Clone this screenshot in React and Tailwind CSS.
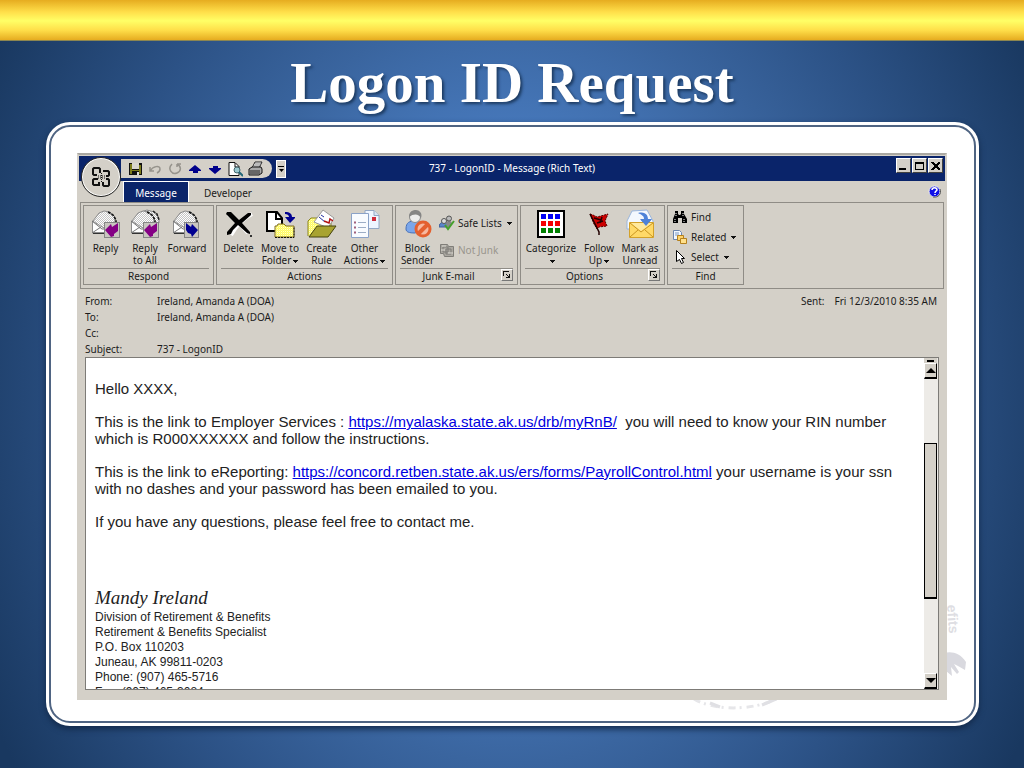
import React from 'react';

const Caret = () => (
  <svg width="5" height="3" viewBox="0 0 5 3" className="ml-0.5 inline-block align-middle" shapeRendering="crispEdges">
    <path d="M0 0h5v1H4v1H3v1H2V2H1V1H0z" fill="#111" />
  </svg>
);

const Icon = ({ size = 30, children, crisp }) => (
  <svg width={size} height={size} viewBox={`0 0 ${size} ${size}`} className="shrink-0" shapeRendering={crisp ? 'crispEdges' : 'auto'} aria-hidden="true">
    {children}
  </svg>
);

const Envelope = () => (
  <g>
    <path d="M2 12 8 4l5-2 6 1 5 5v7l-7 4H6z" fill="url(#dither)" stroke="#8b8b8b" />
    <path d="M17 3l5 3 3 5v4" fill="none" stroke="#111" strokeWidth="1.6" strokeDasharray="3 1" />
    <path d="M1.500 12v11.500h22V13l-9 7z" fill="#fff" stroke="#8b8b8b" />
    <path d="M1 12l10 8h4l9-7M1 24l9-6" fill="none" stroke="#777" />
    <path d="M2 24.500h12" stroke="#333" />
  </g>
);

const Dither = () => (
  <defs>
    <pattern id="dither" width="2" height="2" patternUnits="userSpaceOnUse">
      <rect width="2" height="2" fill="#fff" />
      <rect width="1" height="1" fill="#c4c4c4" />
      <rect x="1" y="1" width="1" height="1" fill="#c4c4c4" />
    </pattern>
    <pattern id="yellow" width="2" height="2" patternUnits="userSpaceOnUse">
      <rect width="2" height="2" fill="#ffff5a" />
      <rect width="1" height="1" fill="#fffbd0" />
      <rect x="1" y="1" width="1" height="1" fill="#fff68a" />
    </pattern>
  </defs>
);

const ReplyBadge = () => (
  <g>
    <rect x="13.500" y="13.500" width="15" height="15" fill="#c9c6c0" stroke="#858585" />
    <path d="M14 21l6-6 1 3 6-4v8l-4 3v2l-3 1z" fill="#850085" />
  </g>
);

const ReplyIcon = () => (
  <Icon>
    <Dither />
    <Envelope />
    <ReplyBadge />
  </Icon>
);

const ReplyAllIcon = () => (
  <Icon>
    <path d="M11 3l6-2 7 2 5 6v5l-3 2" fill="url(#dither)" stroke="#8b8b8b" />
    <path d="M23 2l4 3 2 6" fill="none" stroke="#222" strokeWidth="1.500" strokeDasharray="3 1" />
    <Envelope />
    <ReplyBadge />
  </Icon>
);

const ForwardIcon = () => (
  <Icon>
    <Envelope />
    <rect x="12.500" y="13.500" width="14" height="15" fill="#c9c6c0" stroke="#858585" />
    <path d="M14 14l5 4 1-3 6 6-6 7-1-3-3-1-2-3z" fill="#000090" />
  </Icon>
);

const DeleteIcon = () => (
  <Icon>
    <path d="M4 5c7 5 14 12 20 19M28 5C18 10 12 17 7 26" stroke="#fff" strokeWidth="4" fill="none" />
    <path d="M3 3h4l8 8 9-7h3v2l-9 8 8 9v2l-3-1-9-8-5 5-2 4-4 1v-3l8-9-7-7-2-2z" fill="#000" />
    <rect x="26" y="26" width="2" height="2" fill="#333" />
  </Icon>
);

const MoveIcon = () => (
  <Icon>
    <path d="M2 3h10l5 6v13H2z" fill="#fff" stroke="#000" strokeWidth="2" />
    <path d="M11 3v7h6" fill="none" stroke="#000" strokeWidth="2" />
    <path d="M10 17h2l1-2h6l2 2h8v11H10z" fill="url(#yellow)" stroke="#806d20" />
    <path d="M10 28.500h19V18" fill="none" stroke="#111" strokeDasharray="2 1" />
    <path d="M20 3c5 0 7 2 7 5h4l-6 6-5-6h4c0-2-2-3-4-3z" fill="#000090" />
  </Icon>
);

const CreateRuleIcon = () => (
  <Icon>
    <path d="M1 27V12l3-3h6l3 3h11v5" fill="url(#yellow)" stroke="#8a8420" />
    <path d="M7 13l9-12 11 8-6 10z" fill="#fff" stroke="#999" />
    <path d="M12 8l6 5M14 6l3 2" stroke="#2030a0" />
    <path d="M17 12l5 2 1-4 3 2" stroke="#b01010" strokeWidth="1.500" fill="none" />
    <path d="M2 28l8-11h19l-8 11z" fill="#a8a330" stroke="#45430c" />
  </Icon>
);

const OtherIcon = () => (
  <Icon>
    <path d="M15 1.500h9l5 5v13H15z" fill="#eef5ff" stroke="#93a7c4" />
    <path d="M24 1.500v5h5" fill="#d5e3f5" stroke="#93a7c4" />
    <rect x="22" y="8" width="4" height="4" fill="#cf2c3c" />
    <path d="M1.500 4.500h17v24h-17z" fill="#f8fbff" stroke="#8aa2c8" />
    <path d="M4 13.500h2M4 18.500h2M4 23.500h2" stroke="#a0607c" strokeWidth="2" />
    <path d="M8 13.500h8M8 18.500h8M8 23.500h8" stroke="#9cadc6" />
  </Icon>
);

const BlockIcon = () => (
  <Icon>
    <path d="M3 20c0-7 4-8 9-8s8 4 8 9l-8 3c-6 0-9-1-9-4z" fill="#7ba6ea" stroke="#4670b8" />
    <circle cx="12" cy="8" r="5.500" fill="#ececec" stroke="#8a8a8a" />
    <path d="M6 8c0-6 4-7 7-7s7 3 5 8c-2-4-7-5-12-1z" fill="#858585" />
    <circle cx="20" cy="20" r="7" fill="#f7b9a0" stroke="#e4602f" strokeWidth="3" />
    <path d="M15 25L25 15" stroke="#e4602f" strokeWidth="4" />
  </Icon>
);

const CategorizeIcon = () => (
  <Icon crisp>
    <rect x="1" y="1" width="28" height="28" fill="#000" />
    <rect x="3" y="3" width="24" height="24" fill="#fff" />
    {['#0000f5', '#f50000', '#008000'].map((fill, row) => [0, 1, 2].map(col => (
      <rect key={`${row}${col}`} x={5 + col * 7} y={5 + row * 7} width="5" height="5" fill={fill} />
    )))}
  </Icon>
);

const FlagIcon = () => (
  <Icon>
    <path d="M6 5l3 1 4 2 11-3-3 7 2 5-8 1-2 2-3-5z" fill="#cc0000" stroke="#5a0000" strokeDasharray="2 1" />
    <path d="M6 5l9 18v3M10 9l7 2M13 14l6-2M18 8l-2 6" stroke="#200" fill="none" strokeWidth="1.500" />
  </Icon>
);

const UnreadIcon = () => (
  <Icon>
    <path d="M2 12L7 2l15-1 6 11v8H2z" fill="#f4f8fd" stroke="#9bb6dc" />
    <path d="M13 4c8-2 10 3 10 6h4l-6 7-6-7h4c0-3-2-4-6-6z" fill="#4e82d8" />
    <path d="M4.500 13.500h24v15h-24z" fill="#ffd968" stroke="#d3a12a" />
    <path d="M6 14l10 8 11-8z" fill="#ffe99e" />
    <path d="M5 14l11 9 12-9M5 28l8-7M28 28l-8-7" fill="none" stroke="#c99522" />
    <path d="M16 11h10l-5 6z" fill="#4e82d8" />
  </Icon>
);

const SafeIcon = () => (
  <Icon size={16}>
    <path d="M0 12c0-6 9-7 9 0z" fill="#5b86cb" stroke="#3e5f98" />
    <path d="M7 8c1-3 6-3 6 1l-2 3H8z" fill="#888" />
    <circle cx="5" cy="6" r="2.500" fill="#ddd" stroke="#555" />
    <circle cx="10" cy="3.500" r="2.500" fill="#bbb" stroke="#555" />
    <path d="M6 10l3 4 6-8" fill="none" stroke="#45a02c" strokeWidth="2" />
  </Icon>
);

const NotJunkIcon = () => (
  <Icon size={16}>
    <path d="M1.500 2.500h7l1 2h5v10h-9l-1-3h-3z" fill="#aaa7a0" stroke="#7f7d78" />
    <path d="M4 5h5v5H4zM7 7h5v5H7z" fill="none" stroke="#7f7d78" />
    <path d="M2 8h4M9 11h5M3 4h4" stroke="#dedbd4" />
  </Icon>
);

const FindIcon = () => (
  <Icon size={16}>
    <path d="M3 2h3v3l1 1h1l1-1V2h3v3l3 5v4h-5V9H6v5H1v-4l2-5z" fill="#000" />
    <path d="M3 10v3M4 4v3M12 10v3M11 4v3" stroke="#fff" strokeDasharray="1 1" />
  </Icon>
);

const RelatedIcon = () => (
  <Icon size={16}>
    <path d="M1.500 1.500h6l2 2v7h-8z" fill="#f2f7ff" stroke="#6d86ad" />
    <path d="M3 4h4M3 6h4" stroke="#7d9ac4" />
    <path d="M5.500 6.500h6v5h-6z" fill="#ffd36b" stroke="#b5811d" />
    <path d="M8.500 9.500h6v5h-6z" fill="#ffe08a" stroke="#b5811d" />
  </Icon>
);

const SelectIcon = () => (
  <Icon size={16}>
    <path d="M4.500 1.500v11l3-2 2 4 2-1-2-4h3z" fill="#fff" stroke="#000" />
  </Icon>
);

const quickIcons = [
  { name: 'Save', art: <g><path d="M1 2h13v12H1z" fill="#111" /><path d="M2 3h2v10H2zM11 4h2v9h-2z" fill="#7c7c1c" /><path d="M4 2h7v6H4z" fill="#d8d5ce" /><path d="M4 9h7v1H4z" fill="#7c7c1c" /><path d="M9 11h2v3H9z" fill="#ddd" /></g> },
  { name: 'Undo', art: <path d="M2 6v4h4M2 10c3-5 10-6 10-2 0 2-1 3-3 4" fill="none" stroke="#96938c" strokeWidth="1.500" /> },
  { name: 'Repeat', art: <path d="M4 3c-5 5 0 11 5 9 5-2 4-7 0-9M9 3h4M9 3v3" fill="none" stroke="#96938c" strokeWidth="1.500" /> },
  { name: 'Previous item', art: <path d="M7 4l6 5v1h-3v2H5v-2H1V9z" fill="#00008b" /> },
  { name: 'Next item', art: <path d="M7 13L1 8V7h4V5h5v2h3v1z" fill="#00008b" /> },
  { name: 'Print preview', art: <g><path d="M1 1.500h6l4 4v9H1z" fill="#fff" stroke="#111" /><path d="M7 2v4h4" fill="none" stroke="#111" /><circle cx="9" cy="9" r="3" fill="#9bc9d0" stroke="#44666c" /><path d="M11 11l4 4" stroke="#267" strokeWidth="2" /></g> },
  { name: 'Print', art: <g><path d="M4 7l3-6h7l-3 6z" fill="#fff" stroke="#222" /><path d="M7 3h6M6 5h6" stroke="#777" /><path d="M1 8l3-2h9l1 2v4l-3 2H1z" fill="#aaa" stroke="#111" /><path d="M2 10h10M2 12h10" stroke="#222" /></g> },
];

const LargeButton = ({ icon, lines, caret, width }) => (
  <button type="button" className={`flex flex-col items-center ${width}`}>
    {icon}
    <span className="mt-[3px] text-center text-[10px] leading-3 whitespace-nowrap">
      {lines[0]}
      <br />
      {lines[1]}
      {caret && <Caret />}
    </span>
  </button>
);

const SmallButton = ({ icon, label, caret, disabled }) => (
  <button type="button" disabled={disabled} className="flex h-5 items-center gap-[3px] text-[10px] whitespace-nowrap disabled:text-[#99958d]">
    {icon}
    <span>{label}</span>
    {caret && <Caret />}
  </button>
);

const Group = ({ title, width, launcher, children }) => (
  <section className={`flex h-[80px] flex-col border border-[#8f8c86] px-0.5 pt-[3px] ${width}`}>
    <div className="flex flex-1">{children}</div>
    <div className="relative mx-0.5 h-4 border-t border-[#8f8c86] text-center text-[10px] leading-[14px]">
      <h2 className={launcher ? 'pr-4' : ''}>{title}</h2>
      {launcher && (
        <button type="button" aria-label={`${title} options`} className="absolute top-0 right-0 grid size-3 place-items-center border border-white border-r-[#777] border-b-[#777]">
          <svg width="8" height="8" viewBox="0 0 8 8" shapeRendering="crispEdges">
            <path d="M0 5V0h6v1H1v4zM3 3h1v1h1v1h1V3h1v4H3V6h2V5H4V4H3z" fill="#111" />
          </svg>
        </button>
      )}
    </div>
  </section>
);

const Ribbon = () => (
  <div className="mx-px flex h-[87px] gap-0.5 border border-[#8f8c86] px-0.5 pt-0.5">
    <Group title="Respond" width="w-[131px]">
      <LargeButton width="w-[39px]" icon={<ReplyIcon />} lines={['Reply', '']} />
      <LargeButton width="w-[40px]" icon={<ReplyAllIcon />} lines={['Reply', 'to All']} />
      <LargeButton width="w-[44px]" icon={<ForwardIcon />} lines={['Forward', '']} />
    </Group>
    <Group title="Actions" width="w-[177px]">
      <LargeButton width="w-[39px]" icon={<DeleteIcon />} lines={['Delete', '']} />
      <LargeButton width="w-[44px]" icon={<MoveIcon />} lines={['Move to', 'Folder']} caret />
      <LargeButton width="w-[39px]" icon={<CreateRuleIcon />} lines={['Create', 'Rule']} />
      <LargeButton width="w-[47px]" icon={<OtherIcon />} lines={['Other', 'Actions']} caret />
    </Group>
    <Group title="Junk E-mail" width="w-[123px]" launcher>
      <LargeButton width="w-[39px]" icon={<BlockIcon />} lines={['Block', 'Sender']} />
      <div className="ml-0.5 flex flex-col gap-[7px] pt-1">
        <SmallButton icon={<SafeIcon />} label="Safe Lists" caret />
        <SmallButton icon={<NotJunkIcon />} label="Not Junk" disabled />
      </div>
    </Group>
    <Group title="Options" width="w-[145px]" launcher>
      <LargeButton width="w-[56px]" icon={<CategorizeIcon />} lines={['Categorize', '']} caret />
      <LargeButton width="w-[40px]" icon={<FlagIcon />} lines={['Follow', 'Up']} caret />
      <LargeButton width="w-[42px]" icon={<UnreadIcon />} lines={['Mark as', 'Unread']} />
    </Group>
    <Group title="Find" width="w-[77px]">
      <div className="-mt-0.5 ml-0.5 flex flex-col">
        <SmallButton icon={<FindIcon />} label="Find" />
        <SmallButton icon={<RelatedIcon />} label="Related" caret />
        <SmallButton icon={<SelectIcon />} label="Select" caret />
      </div>
    </Group>
  </div>
);

const windowButtons = [
  { name: 'Minimize', path: 'M1 7h7v2H1z' },
  { name: 'Maximize', path: 'M1 1h9v8H1zM2 3v5h7V3z' },
  { name: 'Close', path: 'M1 1h2l2 2h1l2-2h2v1L7 5l3 3v1H8L6 7H5L3 9H1V8l3-3-3-3z' },
];

const TitleBar = () => (
  <header className="grid h-[25px] grid-cols-[1fr_auto_1fr] items-center bg-[#0a246a]">
    <div className="ml-[42px] flex items-center gap-1">
      <div className="flex h-[19px] items-center gap-[5px] rounded-r-full bg-[#d4d0c8] pr-[9px] pl-[7px]">
        {quickIcons.map(item => (
          <button key={item.name} type="button" aria-label={item.name}>
            <svg width="15" height="16" viewBox="0 0 15 16">{item.art}</svg>
          </button>
        ))}
      </div>
      <button type="button" aria-label="Customize toolbar" className="flex h-[18px] w-2.5 flex-col items-center justify-center gap-0.5 border border-white bg-[#d4d0c8]">
        <span className="h-px w-1.5 bg-black"></span>
        <svg width="5" height="3" viewBox="0 0 5 3"><path d="M0 0h5L2.500 3z" /></svg>
      </button>
    </div>
    <h2 className="text-[10px] text-white">737 - LogonID - Message (Rich Text)</h2>
    <div className="flex justify-end pr-0.5 pb-[6px]">
      {windowButtons.map(item => (
        <button key={item.name} type="button" aria-label={item.name} className="ml-px grid h-[15px] w-[15px] place-items-center border border-white border-r-[#404040] border-b-[#404040] bg-[#d4d0c8]">
          <svg width="11" height="10" viewBox="0 0 11 10" shapeRendering="crispEdges"><path d={item.path} fillRule="evenodd" /></svg>
        </button>
      ))}
    </div>
  </header>
);

const OfficeButton = () => (
  <button type="button" aria-label="Office" className="absolute top-0.5 left-0.5 grid size-10 place-items-center rounded-full border border-[#222] bg-[#d4d0c8] ring-1 ring-white ring-inset">
    <svg width="20" height="22" viewBox="0 0 20 22" fill="none" stroke="#111" strokeWidth="2">
      <path d="M6 9H3L2 8V3l1-1h5l1 1v4M12 5h5l1 1v3l-1 1h-2M7 13H3l-1 1v4l1 1h5v-3M15 13h2l1 1v5l-1 1h-4l-1-1v-3" />
      <path d="M7 10h7M7 12h7M10.500 7v9" strokeWidth="1" strokeDasharray="1 1" />
    </svg>
  </button>
);

const fields = [
  { label: 'From:', value: 'Ireland, Amanda A (DOA)' },
  { label: 'To:', value: 'Ireland, Amanda A (DOA)' },
  { label: 'Cc:', value: '' },
  { label: 'Subject:', value: '737 - LogonID' },
];

const MessageHeader = () => (
  <div className="flex justify-between px-1.5 pt-1 text-[10px] leading-4">
    <dl className="grid grid-cols-[72px_auto]">
      {fields.map(field => (
        <React.Fragment key={field.label}>
          <dt>{field.label}</dt>
          <dd className="h-4">{field.value}</dd>
        </React.Fragment>
      ))}
    </dl>
    <p className="flex gap-2.5 pr-0.5"><span>Sent:</span><span>Fri 12/3/2010 8:35 AM</span></p>
  </div>
);

const ScrollArrow = ({ name, path }) => (
  <button type="button" aria-label={name} className="grid h-4 w-[13px] shrink-0 place-items-center border border-white border-r-black border-b-2 border-b-black bg-[#d4d0c8]">
    <svg width="10" height="5" viewBox="0 0 10 5"><path d={path} /></svg>
  </button>
);

const Scrollbar = () => (
  <div className="flex w-[14px] shrink-0 flex-col bg-[#edebe7] pr-px">
    <div className="h-[5px] bg-[#d4d0c8] px-[3px] pt-0.5"><div className="h-0.5 bg-black"></div></div>
    <ScrollArrow name="Scroll up" path="M0 5l5-5 5 5z" />
    <div className="flex-[65]"></div>
    <div className="flex-[156] border border-black border-b-2 bg-[#d4d0c8]"></div>
    <div className="flex-[76]"></div>
    <ScrollArrow name="Scroll down" path="M0 0l5 5 5-5z" />
  </div>
);

const signature = [
  'Division of Retirement & Benefits',
  'Retirement & Benefits Specialist',
  'P.O. Box 110203',
  'Juneau, AK 99811-0203',
  'Phone: (907) 465-5716',
  'Fax: (907) 465-3084',
];

const MessageBody = () => (
  <div className="mx-1.5 mb-2 flex min-h-0 flex-1 border border-[#7d7b77] bg-white">
    <article className="min-w-0 flex-1 overflow-hidden pt-[22px] pr-6 pl-[9px] font-['Liberation_Sans',Arial,sans-serif] text-[15px] leading-[17px] text-[#222]">
      <div className="space-y-4">
        <p>Hello XXXX,</p>
        <p>This is the link to Employer Services : <a href="https://myalaska.state.ak.us/drb/myRnB/" className="text-[#0000e0] underline">https://myalaska.state.ak.us/drb/myRnB/</a>&nbsp; you will need to know your RIN number which is R000XXXXXX and follow the instructions.</p>
        <p>This is the link to eReporting: <a href="https://concord.retben.state.ak.us/ers/forms/PayrollControl.html" className="text-[#0000e0] underline">https://concord.retben.state.ak.us/ers/forms/PayrollControl.html</a> your username is your ssn with no dashes and your password has been emailed to you.</p>
        <p>If you have any questions, please feel free to contact me.</p>
      </div>
      <div className="mt-[58px] text-[12px] leading-[15px]">
        <p className="pb-0.5 font-['Liberation_Serif',serif] text-[19px] leading-5 italic">Mandy Ireland</p>
        {signature.map(line => <p key={line}>{line}</p>)}
      </div>
    </article>
    <Scrollbar />
  </div>
);

const Seal = () => (
  <svg width="290" height="120" viewBox="0 0 290 120" className="absolute right-0 bottom-2" aria-hidden="true">
    <text transform="translate(263 12) rotate(86)" fontSize="14" fontFamily="Liberation Sans" fontWeight="bold" fill="#dedee3">efits</text>
    <path d="M260 60c8-2 16 0 22 9l-1 8-7-4-4-2 5 8-2 2-6-7 1 9-6-5-2-6z" fill="#d9d9df" />
    <path d="M10 106c20 12 60 12 84-1" fill="none" stroke="#e6e6e9" strokeWidth="3" strokeDasharray="7 4 2 5" />
    <path d="M26 110l10 4M78 112l14-6" stroke="#e0e0e4" strokeWidth="3" />
  </svg>
);

const MessageWindow = () => (
  <section className="relative flex min-h-0 flex-1 flex-col border-2 border-[#d4d0c8] border-t-[#aaa8a2] bg-[#d4d0c8] pt-px font-['Noto_Sans','Open_Sans',sans-serif] text-[#1b1b1b]">
    <TitleBar />
    <OfficeButton />
    <nav className="flex h-[21px] items-stretch text-[10px]">
      <button type="button" className="ml-[44px] w-[66px] border border-white border-b-0 bg-[#0a246a] pt-0.5 text-white">Message</button>
      <button type="button" className="w-[78px] pt-[3px]">Developer</button>
      <button type="button" aria-label="Help" className="mr-1 ml-auto">
        <svg width="13" height="13" viewBox="0 0 13 13">
          <circle cx="6.500" cy="6.500" r="5.500" fill="#1010e8" stroke="#eee" />
          <path d="M12 4c2 5-2 9-7 8" fill="none" stroke="#555" />
          <path d="M4 5c0-3 5-3 5 0 0 1-2 1-2 3M7 9v1" fill="none" stroke="#fff" strokeWidth="1.500" />
        </svg>
      </button>
    </nav>
    <Ribbon />
    <MessageHeader />
    <MessageBody />
  </section>
);

export default function App() {
  return (
    <main className="flex h-screen flex-col overflow-hidden bg-[radial-gradient(57%_95%_at_center,#4a86cc_0%,#4576b8_36%,#3a659f_52%,#2c5286_72%,#193860_100%)]">
      <div className="h-[41px] shrink-0 border-b border-[#8c8650] bg-[linear-gradient(#e6ac20,#ffdf4a_30%,#ffff66_52%,#ffdf4a_75%,#e6ac20)]"></div>
      <h1 className="shrink-0 pt-[7px] text-center font-['Liberation_Serif',serif] text-[57px] leading-[70px] font-bold text-white [text-shadow:2px_2px_3px_#1c3a60]">Logon ID Request</h1>
      <div className="mt-1 mr-[45px] mb-[42px] ml-[46px] flex min-h-0 flex-1 rounded-[24px] bg-white p-[3px] shadow-[0_3px_6px_#12294a]">
        <div className="relative flex min-w-0 flex-1 flex-col rounded-[21px] border-2 border-[#4f6482] pt-[26px] pr-[27px] pb-[21px] pl-[26px]">
          <Seal />
          <MessageWindow />
        </div>
      </div>
    </main>
  );
}
